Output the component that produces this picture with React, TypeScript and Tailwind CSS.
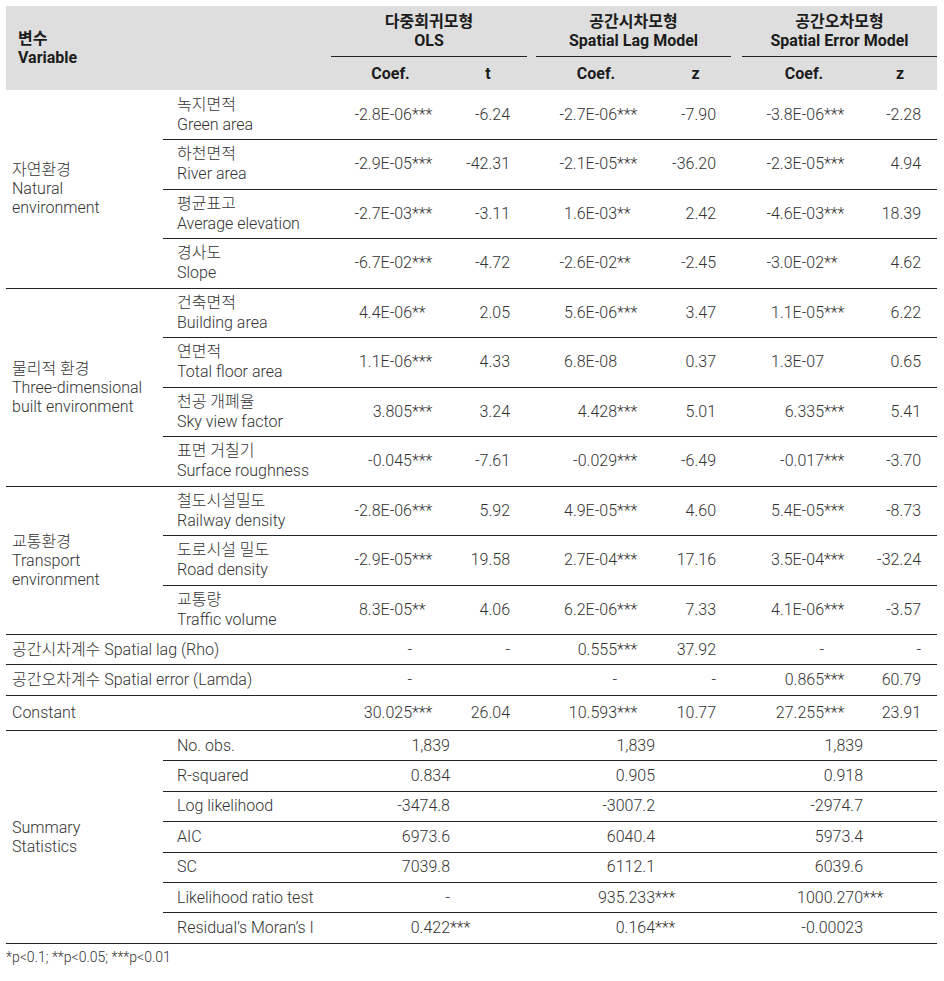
import React from 'react'

type Cell = [string, string] | string

type Row = {
  ko: string
  en: string
  vals: Cell[]
}

const groups: { ko: string; en: string[]; rows: Row[] }[] = [
  {
    ko: '자연환경',
    en: ['Natural', 'environment'],
    rows: [
      { ko: '녹지면적', en: 'Green area', vals: [['-2.8E-06', '***'], '-6.24', ['-2.7E-06', '***'], '-7.90', ['-3.8E-06', '***'], '-2.28'] },
      { ko: '하천면적', en: 'River area', vals: [['-2.9E-05', '***'], '-42.31', ['-2.1E-05', '***'], '-36.20', ['-2.3E-05', '***'], '4.94'] },
      { ko: '평균표고', en: 'Average elevation', vals: [['-2.7E-03', '***'], '-3.11', ['1.6E-03', '**'], '2.42', ['-4.6E-03', '***'], '18.39'] },
      { ko: '경사도', en: 'Slope', vals: [['-6.7E-02', '***'], '-4.72', ['-2.6E-02', '**'], '-2.45', ['-3.0E-02', '**'], '4.62'] },
    ],
  },
  {
    ko: '물리적 환경',
    en: ['Three-dimensional', 'built environment'],
    rows: [
      { ko: '건축면적', en: 'Building area', vals: [['4.4E-06', '**'], '2.05', ['5.6E-06', '***'], '3.47', ['1.1E-05', '***'], '6.22'] },
      { ko: '연면적', en: 'Total floor area', vals: [['1.1E-06', '***'], '4.33', ['6.8E-08', ''], '0.37', ['1.3E-07', ''], '0.65'] },
      { ko: '천공 개폐율', en: 'Sky view factor', vals: [['3.805', '***'], '3.24', ['4.428', '***'], '5.01', ['6.335', '***'], '5.41'] },
      { ko: '표면 거칠기', en: 'Surface roughness', vals: [['-0.045', '***'], '-7.61', ['-0.029', '***'], '-6.49', ['-0.017', '***'], '-3.70'] },
    ],
  },
  {
    ko: '교통환경',
    en: ['Transport', 'environment'],
    rows: [
      { ko: '철도시설밀도', en: 'Railway density', vals: [['-2.8E-06', '***'], '5.92', ['4.9E-05', '***'], '4.60', ['5.4E-05', '***'], '-8.73'] },
      { ko: '도로시설 밀도', en: 'Road density', vals: [['-2.9E-05', '***'], '19.58', ['2.7E-04', '***'], '17.16', ['3.5E-04', '***'], '-32.24'] },
      { ko: '교통량', en: 'Traffic volume', vals: [['8.3E-05', '**'], '4.06', ['6.2E-06', '***'], '7.33', ['4.1E-06', '***'], '-3.57'] },
    ],
  },
]

const extras: { label: string; h: string; vals: Cell[] }[] = [
  { label: '공간시차계수 Spatial lag (Rho)', h: 'h-[30px]', vals: [['-', ''], '-', ['0.555', '***'], '37.92', ['-', ''], '-'] },
  { label: '공간오차계수 Spatial error (Lamda)', h: 'h-[31px]', vals: [['-', ''], '', ['-', ''], '-', ['0.865', '***'], '60.79'] },
  { label: 'Constant', h: 'h-[35px]', vals: [['30.025', '***'], '26.04', ['10.593', '***'], '10.77', ['27.255', '***'], '23.91'] },
]

const summary: { label: string; vals: [string, string][] }[] = [
  { label: 'No. obs.', vals: [['1,839', ''], ['1,839', ''], ['1,839', '']] },
  { label: 'R-squared', vals: [['0.834', ''], ['0.905', ''], ['0.918', '']] },
  { label: 'Log likelihood', vals: [['-3474.8', ''], ['-3007.2', ''], ['-2974.7', '']] },
  { label: 'AIC', vals: [['6973.6', ''], ['6040.4', ''], ['5973.4', '']] },
  { label: 'SC', vals: [['7039.8', ''], ['6112.1', ''], ['6039.6', '']] },
  { label: 'Likelihood ratio test', vals: [['-', ''], ['935.233', '***'], ['1000.270', '***']] },
  { label: 'Residual’s Moran’s I', vals: [['0.422', '***'], ['0.164', '***'], ['-0.00023', '']] },
]

const line = 'border-b border-[#222]'
const coefPad = ['pr-[17px]', 'pr-[17px]', 'pr-[18px]']
const statPad = ['pr-[21px]', 'pr-[20px]', 'pr-[16px]']
const sumCols = ['grid-cols-[119px_1fr]', 'grid-cols-[124px_1fr]', 'grid-cols-[127px_1fr]']

const ValueCells = ({ vals }: { vals: Cell[] }) => (
  <>
    {vals.map((v, i) => {
      const g = Math.floor(i / 2)
      if (Array.isArray(v)) {
        return (
          <td key={i} className={`${line} text-right ${coefPad[g]}`}>
            <span>{v[0]}</span>
            <span className="inline-block w-[21px] text-left">{v[1]}</span>
          </td>
        )
      }
      return (
        <td key={i} className={`${line} text-right ${statPad[g]}`}>
          {v}
        </td>
      )
    })}
  </>
)

export default function App() {
  return (
    <div className="bg-white p-[6px] text-[16px] font-light text-[#333] [font-family:Roboto,'Noto_Sans_CJK_KR',sans-serif]">
      <table className="w-[931px] table-fixed border-collapse">
        <colgroup>
          <col className="w-[157px]" />
          <col className="w-[168px]" />
          <col className="w-[119px]" />
          <col className="w-[81px]" />
          <col className="w-[124px]" />
          <col className="w-[81px]" />
          <col className="w-[127px]" />
          <col className="w-[74px]" />
        </colgroup>
        <thead className="bg-[#dedede] font-bold text-[#1c1c1c]">
          <tr className="h-[51px]">
            <th rowSpan={2} colSpan={2} className="pl-[12px] text-left align-middle leading-[19px]">
              변수
              <br />
              Variable
            </th>
            <th colSpan={2} className="p-0 align-bottom">
              <div className="mr-[4px] border-b border-[#222] pb-[6px] text-center leading-[19px]">
                다중회귀모형
                <br />
                OLS
              </div>
            </th>
            <th colSpan={2} className="p-0 align-bottom">
              <div className="mx-[5px] border-b border-[#222] pb-[6px] text-center leading-[19px]">
                공간시차모형
                <br />
                Spatial Lag Model
              </div>
            </th>
            <th colSpan={2} className="p-0 align-bottom">
              <div className="ml-[6px] border-b border-[#222] pb-[6px] text-center leading-[19px]">
                공간오차모형
                <br />
                Spatial Error Model
              </div>
            </th>
          </tr>
          <tr className="h-[33px]">
            <th className="text-center">Coef.</th>
            <th className="pr-[5px] text-center">t</th>
            <th className="pl-[6px] text-center">Coef.</th>
            <th className="text-center">z</th>
            <th className="pl-[9px] text-center">Coef.</th>
            <th className="text-center">z</th>
          </tr>
        </thead>
        <tbody>
          {groups.map((grp) =>
            grp.rows.map((r, ri) => (
              <tr key={grp.ko + r.en} className="h-[49.5px]">
                {ri === 0 && (
                  <td rowSpan={grp.rows.length} className={`${line} pl-[6px] align-middle leading-[19px]`}>
                    {grp.ko}
                    {grp.en.map((e) => (
                      <div key={e}>{e}</div>
                    ))}
                  </td>
                )}
                <td className={`${line} pl-[14px] leading-[20px]`}>
                  {r.ko}
                  <br />
                  {r.en}
                </td>
                <ValueCells vals={r.vals} />
              </tr>
            ))
          )}
          {extras.map((x) => (
            <tr key={x.label} className={x.h}>
              <td colSpan={2} className={`${line} pl-[6px]`}>
                {x.label}
              </td>
              <ValueCells vals={x.vals} />
            </tr>
          ))}
          {summary.map((s, si) => (
            <tr key={s.label} className="h-[30.4px]">
              {si === 0 && (
                <td rowSpan={summary.length} className={`${line} pl-[6px] align-middle leading-[19px]`}>
                  Summary
                  <br />
                  Statistics
                </td>
              )}
              <td className={`${line} pl-[14px]`}>{s.label}</td>
              {s.vals.map((v, i) => (
                <td key={i} colSpan={2} className={`${line} p-0`}>
                  <div className={`grid ${sumCols[i]}`}>
                    <span className="text-right">{v[0]}</span>
                    <span className="text-left">{v[1]}</span>
                  </div>
                </td>
              ))}
            </tr>
          ))}
        </tbody>
      </table>
      <p className="mt-[5px] text-[14px] leading-[17px]">*p&lt;0.1; **p&lt;0.05; ***p&lt;0.01</p>
    </div>
  )
}
